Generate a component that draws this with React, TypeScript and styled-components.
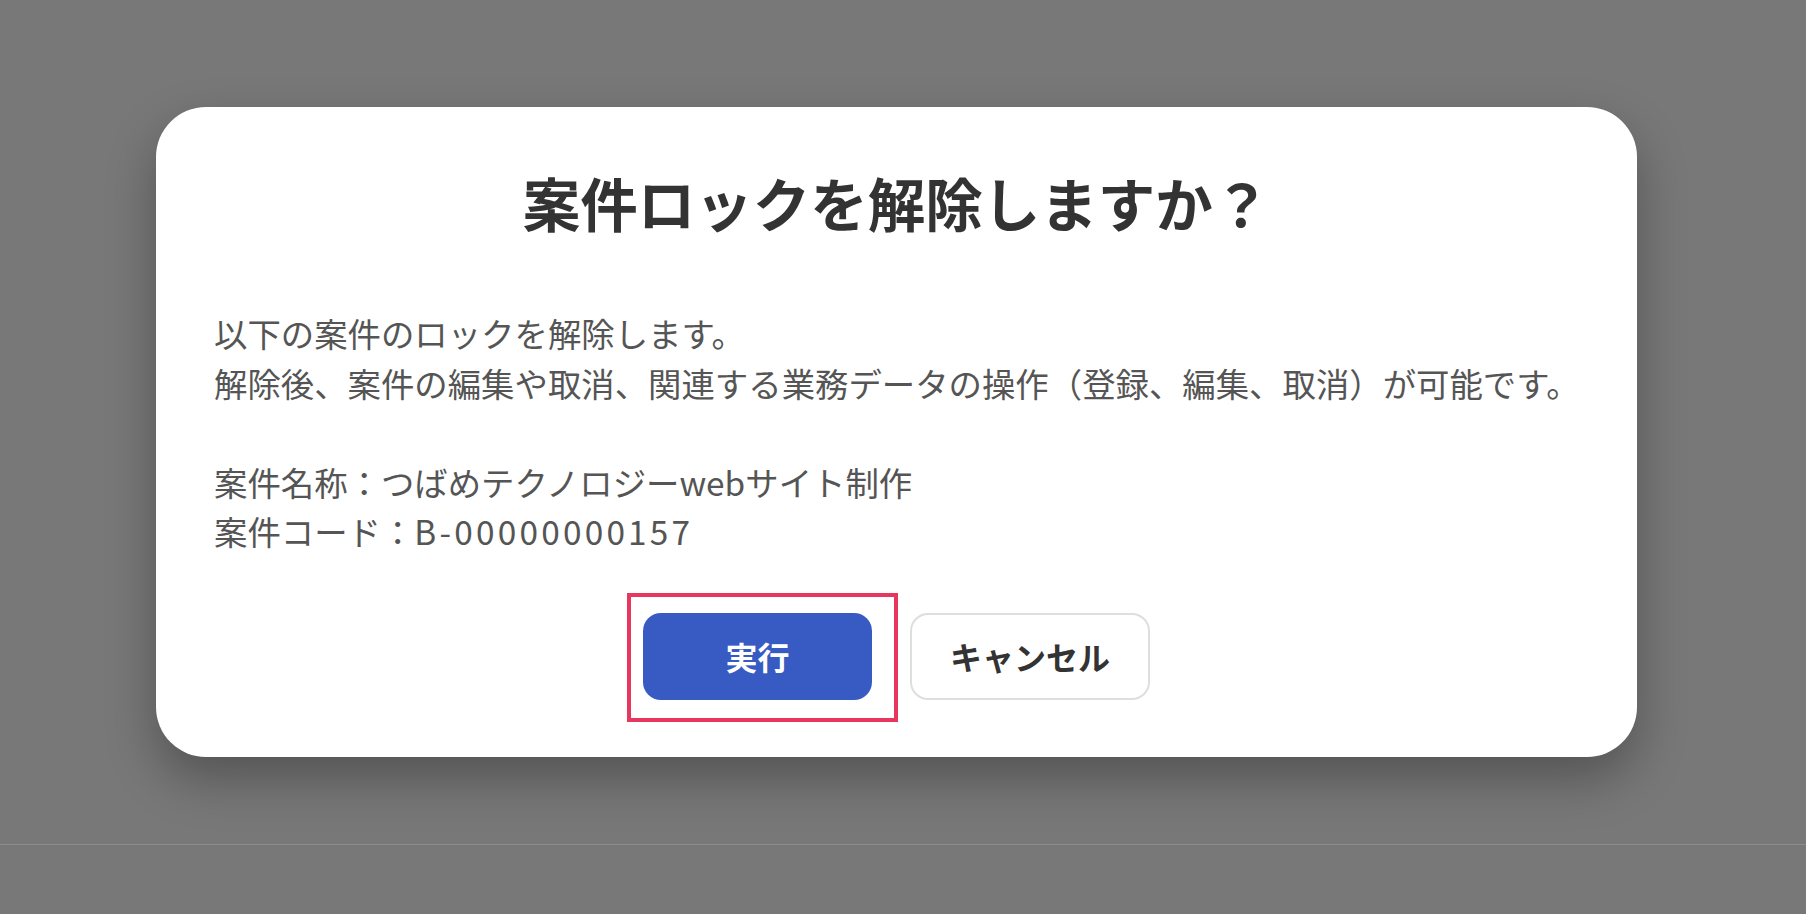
import styled, { createGlobalStyle } from "styled-components";

const GlobalStyle = createGlobalStyle`
  html, body {
    margin: 0;
    padding: 0;
  }
  body {
    background: #787878;
    font-family: "Noto Sans CJK JP", "Noto Sans", sans-serif;
  }
`;

const Backdrop = styled.div`
  height: 914px;
  background: #787878;
  display: flex;
  flex-direction: column;
  overflow: hidden;
`;

const Stage = styled.div`
  height: 844px;
  box-sizing: border-box;
  padding: 107px 13px 0 0;
  display: flex;
  justify-content: center;
  align-items: flex-start;
`;

const PageEdge = styled.div`
  height: 1px;
  background: #8d8d8d;
`;

const Dialog = styled.section`
  width: 1481px;
  height: 650px;
  box-sizing: border-box;
  padding: 62px 40px 57px 58px;
  background: #fff;
  border-radius: 50px;
  box-shadow: 0 22px 50px rgba(0, 0, 0, 0.3);
  display: flex;
  flex-direction: column;
`;

const Title = styled.h2`
  margin: 0 0 0 -18px;
  text-align: center;
  font-size: 57.5px;
  line-height: 67px;
  font-weight: 700;
  color: #333;
`;

const Body = styled.div`
  margin-top: 72px;
  font-size: 33.4px;
  line-height: 49.5px;
  color: #555;
`;

const Line = styled.p`
  margin: 0;
  min-height: 49.5px;
  white-space: nowrap;
`;

// latin code reads wider in the original font
const Code = styled.span`
  letter-spacing: 3.2px;
`;

const Actions = styled.div`
  margin: 57px 0 0 -18px;
  display: flex;
  justify-content: center;
  gap: 38px;
`;

// red annotation frame drawn over the primary button
const Highlight = styled.div`
  position: relative;
  display: flex;
  &::after {
    content: "";
    position: absolute;
    inset: -20px -26px -22px -16px;
    border: 4px solid #e8375f;
    pointer-events: none;
  }
`;

const Button = styled.button<{ $primary?: boolean }>`
  height: 87px;
  box-sizing: border-box;
  border-radius: 18px;
  font-family: inherit;
  font-size: 32px;
  font-weight: 700;
  cursor: pointer;
  ${(p) =>
    p.$primary
      ? `
    width: 229px;
    border: none;
    background: #375ac3;
    color: #fff;
  `
      : `
    padding: 0 38px;
    border: 2px solid #dedede;
    background: #fff;
    color: #333;
  `}
`;

export default function App() {
  return (
    <>
      <GlobalStyle />
      <Backdrop>
        <Stage>
          <Dialog>
            <Title>案件ロックを解除しますか？</Title>
            <Body>
              <Line>以下の案件のロックを解除します。</Line>
              <Line>
                解除後、案件の編集や取消、関連する業務データの操作（登録、編集、取消）が可能です。
              </Line>
              <Line />
              <Line>案件名称：つばめテクノロジーwebサイト制作</Line>
              <Line>
                案件コード：<Code>B-00000000157</Code>
              </Line>
            </Body>
            <Actions>
              <Highlight>
                <Button $primary>実行</Button>
              </Highlight>
              <Button>キャンセル</Button>
            </Actions>
          </Dialog>
        </Stage>
        <PageEdge />
      </Backdrop>
    </>
  );
}
